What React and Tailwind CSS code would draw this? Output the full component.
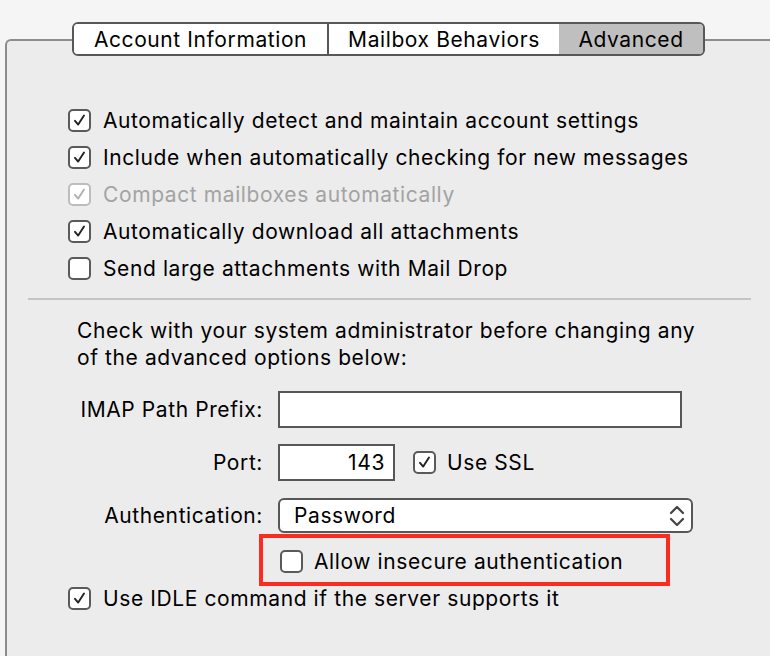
import React from "react";

const font = { fontFamily: "Inter, 'Noto Sans', sans-serif" };

const Check = ({ checked, disabled }) => (
  <span
    className={
      "flex h-[23px] w-[23px] shrink-0 items-center justify-center rounded-[5px] border-2 bg-white " +
      (disabled ? "border-[#bdbdbd]" : "border-[#5a5a5a]")
    }
  >
    {checked && (
      <svg width="15" height="15" viewBox="0 0 15 15">
        <path
          d="M3 7.8 L6.2 11.6 L12 2.6"
          fill="none"
          stroke={disabled ? "#b0b0b0" : "#222"}
          strokeWidth="1.9"
          strokeLinecap="round"
          strokeLinejoin="round"
        />
      </svg>
    )}
  </span>
);

const Row = ({ checked, disabled, children }) => (
  <div className="flex h-[37px] items-center gap-[12px]">
    <Check checked={checked} disabled={disabled} />
    <span className={disabled ? "text-[#a3a3a3]" : "text-black"}>{children}</span>
  </div>
);

export default function App() {
  return (
    <div
      className="h-[656px] w-[770px] overflow-hidden bg-[#f5f5f5] text-[21px] leading-none tracking-[0.6px] text-black"
      style={font}
    >
      {/* tabs */}
      <div className="relative z-10 ml-[72px] mt-[22px] mb-[-17px] flex h-[34px] w-[633px] overflow-hidden rounded-[6px] border-2 border-[#575757]">
        <div className="flex w-[255px] items-center justify-center border-r-2 border-[#575757] bg-white">
          Account Information
        </div>
        <div className="flex w-[230px] items-center justify-center bg-white">
          Mailbox Behaviors
        </div>
        <div className="flex flex-1 items-center justify-center bg-[#bfbfbf]">Advanced</div>
      </div>

      {/* panel */}
      <div className="ml-[5px] h-[640px] w-[800px] rounded-tl-[6px] border-l-2 border-t-2 border-[#8c8c8c] bg-[#ececec] pt-[61px]">
        <div className="pl-[61px]">
          <Row checked>Automatically detect and maintain account settings</Row>
          <Row checked>Include when automatically checking for new messages</Row>
          <Row checked disabled>Compact mailboxes automatically</Row>
          <Row checked>Automatically download all attachments</Row>
          <Row>Send large attachments with Mail Drop</Row>
        </div>

        <div className="ml-[21px] mt-[11px] h-[2px] w-[723px] bg-[#c4c4c4]" />

        <div className="ml-[70px] mt-[17px] leading-[27px]">
          <div>Check with your system administrator before changing any</div>
          <div>of the advanced options below:</div>
        </div>

        <div className="mt-[20px] flex items-center">
          <div className="w-[256px] text-right">IMAP Path Prefix:</div>
          <div className="ml-[15px] h-[37px] w-[404px] border-2 border-[#575757] bg-white" />
        </div>

        <div className="mt-[16px] flex items-center">
          <div className="w-[256px] text-right">Port:</div>
          <div className="ml-[15px] flex h-[37px] w-[117px] items-center justify-end border-2 border-[#575757] bg-white pr-[8px]">
            143
          </div>
          <div className="ml-[18px] flex items-center gap-[11px]">
            <Check checked />
            <span>Use SSL</span>
          </div>
        </div>

        <div className="mt-[17px] flex items-center">
          <div className="w-[256px] text-right">Authentication:</div>
          <div className="ml-[15px] flex h-[35px] w-[415px] items-center justify-between rounded-[6px] border-2 border-[#575757] bg-white pl-[14px] pr-[5px]">
            <span>Password</span>
            <svg width="18" height="26" viewBox="0 0 18 26">
              <path
                d="M3 10 L9 4 L15 10 M3 16 L9 22 L15 16"
                fill="none"
                stroke="#444"
                strokeWidth="2.2"
                strokeLinecap="round"
                strokeLinejoin="round"
              />
            </svg>
          </div>
        </div>

        <div className="ml-[252px] mt-[1px] flex h-[52px] w-[411px] items-center border-[4px] border-[#fb2b20] pl-[17px] pt-[2px]">
          <div className="flex items-center gap-[11px]">
            <Check />
            <span>Allow insecure authentication</span>
          </div>
        </div>

        <div className="ml-[61px] mt-[-6px]">
          <Row checked>Use IDLE command if the server supports it</Row>
        </div>
      </div>
    </div>
  );
}
